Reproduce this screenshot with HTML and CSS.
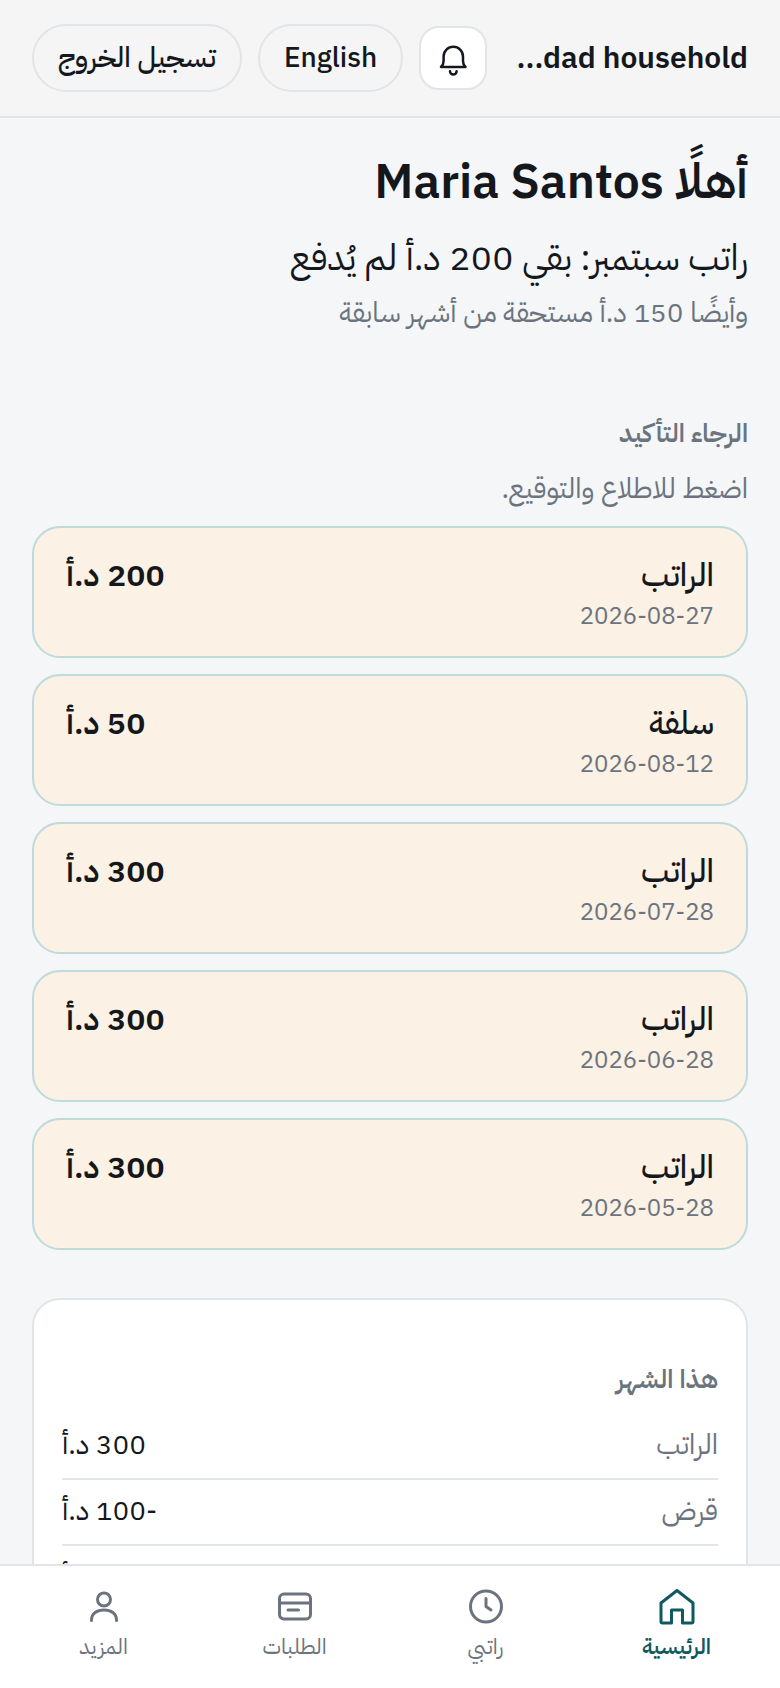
FILE: index.html
```html
<!DOCTYPE html>
<html lang="ar" dir="rtl">
  <head>
    <meta charset="utf-8" />
    <meta name="viewport" content="width=device-width, initial-scale=1" />
    <title>الرئيسية</title>
    <link rel="stylesheet" href="styles.css">
  </head>
  <body>
    <div class="app">
      <header class="topbar">
        <div class="brand" dir="ltr">...dad household</div>
        <button class="bell" type="button" aria-label="الإشعارات">
          <svg class="bell-icon" viewBox="0 0 36 36">
            <path d="M6 27h24.500c-1.500-1.500-2.500-3.500-2.500-6v-4.500a9.700 9.700 0 0 0-19.400 0V21c0 2.500-1 4.500-2.600 6z"/>
            <path d="M15 31.200a3.300 3.300 0 0 0 6.600 0"/>
          </svg>
        </button>
        <button class="pill" type="button" lang="en">English</button>
        <button class="pill" type="button">تسجيل الخروج</button>
      </header>

      <main class="content">
        <section class="hello">
          <h1>أهلًا Maria Santos</h1>
          <p class="due">راتب سبتمبر: بقي 200 د.أ لم يُدفع</p>
          <p class="note">وأيضًا 150 د.أ مستحقة من أشهر سابقة</p>
        </section>

        <section class="confirm">
          <h2>الرجاء التأكيد</h2>
          <p class="note">اضغط للاطلاع والتوقيع.</p>
          <div class="list">
            <button class="item" type="button">
              <span class="item-name">الراتب</span>
              <span class="item-sum">200 د.أ</span>
              <span class="item-date">2026-08-27</span>
            </button>
            <button class="item" type="button">
              <span class="item-name">سلفة</span>
              <span class="item-sum">50 د.أ</span>
              <span class="item-date">2026-08-12</span>
            </button>
            <button class="item" type="button">
              <span class="item-name">الراتب</span>
              <span class="item-sum">300 د.أ</span>
              <span class="item-date">2026-07-28</span>
            </button>
            <button class="item" type="button">
              <span class="item-name">الراتب</span>
              <span class="item-sum">300 د.أ</span>
              <span class="item-date">2026-06-28</span>
            </button>
            <button class="item" type="button">
              <span class="item-name">الراتب</span>
              <span class="item-sum">300 د.أ</span>
              <span class="item-date">2026-05-28</span>
            </button>
          </div>
        </section>

        <section class="month">
          <h2>هذا الشهر</h2>
          <dl>
            <div class="row"><dt>الراتب</dt><dd>300 د.أ</dd></div>
            <div class="row"><dt>قرض</dt><dd>-100 د.أ</dd></div>
            <div class="row"><dt>بقي</dt><dd>200 د.أ</dd></div>
          </dl>
        </section>
      </main>

      <nav class="tabs">
        <a class="tab active" href="#home">
          <svg viewBox="0 0 40 40"><path d="M20 4.500l16 12.500v18.500a1.500 1.500 0 0 1-1.500 1.500H25.500V24h-11v13h-9A1.500 1.500 0 0 1 4 35.500V17z"/></svg>
          <span>الرئيسية</span>
        </a>
        <a class="tab" href="#salary">
          <svg viewBox="0 0 40 40"><circle cx="20" cy="20.500" r="15.500"/><path d="M20 12.500v8l5 3.500"/></svg>
          <span>راتبي</span>
        </a>
        <a class="tab" href="#requests">
          <svg viewBox="0 0 40 40"><rect x="4.500" y="8" width="31" height="25" rx="4.500"/><path d="M4.500 17h31M13 24h10.500"/></svg>
          <span>الطلبات</span>
        </a>
        <a class="tab" href="#more">
          <svg viewBox="0 0 40 40"><circle cx="20" cy="13.500" r="6.500"/><path d="M7.500 34.500v-.5c0-6.500 5.500-10 12.500-10s12.500 3.500 12.500 10v.5"/></svg>
          <span>المزيد</span>
        </a>
      </nav>
    </div>
  </body>
</html>
```
FILE: styles.css
```css
:root{
  --ink:#14181d;
  --muted:#6b747e;
  --line:#e1e5e8;
  --teal:#0f5960;
}
*,:after,:before{box-sizing:border-box}
body{
  margin:0;
  color:var(--ink);
  background:#f4f6f8;
  font:400 28px/40px 'IBM Plex Sans Arabic','Noto Sans','DejaVu Sans',sans-serif;
}
h1,h2,p,dl,dd{margin:0}
button{
  font:inherit;
  color:inherit;
  cursor:pointer;
}
svg{
  fill:none;
  stroke:currentColor;
  stroke-width:3;
  stroke-linecap:round;
  stroke-linejoin:round;
}
.app{
  height:100vh;
  display:flex;
  flex-direction:column;
}

.topbar{
  display:flex;
  align-items:center;
  gap:16px;
  padding:24px 32px;
  background:#f5f5f5;
  border-bottom:2px solid var(--line);
}
.brand{
  flex:1;
  min-width:0;
  text-align:right;
  white-space:nowrap;
  font-size:30px;
  font-weight:600;
}
.pill{
  height:68px;
  padding:0 24px;
  border:2px solid var(--line);
  border-radius:34px;
  background:none;
  font-weight:500;
  white-space:nowrap;
}
.bell{
  display:flex;
  align-items:center;
  justify-content:center;
  width:68px;
  height:64px;
  padding:0;
  border:2px solid var(--line);
  border-radius:20px;
  background:#fff;
}
.bell-icon{
  width:36px;
  height:36px;
  stroke-width:2.5;
}

.content{
  flex:1;
  min-height:0;
  overflow:auto;
  scrollbar-width:none;
  padding:32px 32px 0;
}
h1{
  font-size:48px;
  line-height:64px;
  font-weight:600;
}
h2{
  color:var(--muted);
  font-size:26px;
  line-height:40px;
  font-weight:600;
}
.due{
  margin-top:16px;
  font-size:36px;
  line-height:56px;
}
.note{
  color:var(--muted);
  line-height:38px;
}
.hello .note{margin-top:8px}
.confirm{margin-top:82px}
.confirm .note{margin-top:16px}
.list{
  display:grid;
  gap:16px;
  margin-top:18px;
}
.item{
  display:grid;
  grid-template-columns:1fr auto;
  align-content:start;
  width:100%;
  min-height:132px;
  padding:28px 32px 18px;
  border:2px solid #bfdadb;
  border-radius:28px;
  background:#fbf1e4;
  text-align:start;
}
.item-name,
.item-sum{
  font-size:32px;
  line-height:38px;
}
.item-name{font-weight:500}
.item-sum{font-weight:600}
.item-date{
  color:var(--muted);
  font-size:24px;
  line-height:44px;
}

.month{
  margin-top:48px;
  padding:60px 28px 28px;
  border:2px solid var(--line);
  border-radius:28px;
  background:#fff;
}
.month dl{margin-top:14px}
.row{
  display:flex;
  justify-content:space-between;
  padding:12px 0 14px;
  border-bottom:2px solid var(--line);
  line-height:38px;
}
.row dt{color:var(--muted)}

.tabs{
  display:flex;
  height:124px;
  padding:20px 8px 0;
  border-top:2px solid var(--line);
  background:#fff;
}
.tab{
  flex:1;
  display:flex;
  flex-direction:column;
  align-items:center;
  color:var(--muted);
  font-size:22px;
  line-height:42px;
  text-decoration:none;
}
.tab svg{
  width:40px;
  height:40px;
}
.active{
  color:var(--teal);
  font-weight:600;
}
```
